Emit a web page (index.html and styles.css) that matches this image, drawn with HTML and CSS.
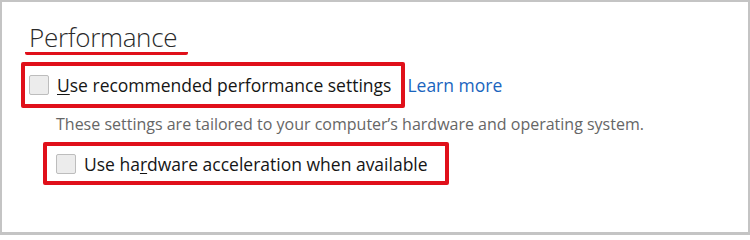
FILE: index.html
```html
<!DOCTYPE html>
<html>
<head>
<meta charset="utf-8">
<link rel="stylesheet" href="styles.css">
</head>
<body>
<div class="panel">
  <h2 class="heading"><span class="heading-text">Performance</span></h2>
  <div class="row">
    <label class="mark mark-1">
      <span class="check"></span>
      <span class="label"><u>U</u>se recommended performance settings</span>
    </label>
    <a class="link" href="#">Learn more</a>
  </div>
  <p class="desc">These settings are tailored to your computer’s hardware and operating system.</p>
  <label class="mark mark-2">
    <span class="check"></span>
    <span class="label">Use ha<u>r</u>dware acceleration when available</span>
  </label>
</div>
</body>
</html>
```
FILE: styles.css
```css
html, body {
  margin: 0;
  padding: 0;
  background: #fff;
}
.panel {
  box-sizing: border-box;
  width: 750px;
  height: 235px;
  border: 2px solid #c4c4c4;
  border-bottom-width: 3px;
  padding: 0 0 0 19px;
  font-family: "Open Sans", "Noto Sans", sans-serif;
  color: #151515;
}
.heading {
  margin: 20px 0 0 4px;
  padding: 0;
  font-weight: 300;
  font-size: 26px;
  line-height: 30px;
  color: #2a2a2a;
}
.heading-text {
  display: inline-block;
  padding: 0 11px 0 4px;
  border-bottom: 3px solid #e0101a;
  border-radius: 0 0 2px 2px;
  letter-spacing: -0.3px;
}
.row {
  display: flex;
  align-items: center;
  margin-top: 7px;
}
.mark {
  display: inline-flex;
  align-items: center;
  box-sizing: border-box;
  border: 4px solid #e0101a;
  border-radius: 2px;
}
.mark-1 {
  height: 46px;
  padding: 0 10px 0 4px;
}
.mark-2 {
  height: 43px;
  margin-left: 22px;
  padding: 0 17px 0 9px;
}
.check {
  box-sizing: border-box;
  width: 20px;
  height: 20px;
  border: 1px solid #bdbdbd;
  border-radius: 2px;
  background: #ececec;
  flex: none;
}
.label {
  margin-left: 8px;
  font-size: 17.5px;
  line-height: 24px;
}
.label u {
  text-decoration-thickness: 1px;
  text-underline-offset: 2px;
}
.link {
  margin-left: 2px;
  font-size: 17.5px;
  color: #1a64be;
  text-decoration: none;
}
.desc {
  margin: 5px 0 7px 35px;
  font-size: 16px;
  line-height: 22px;
  color: #666;
}
```
